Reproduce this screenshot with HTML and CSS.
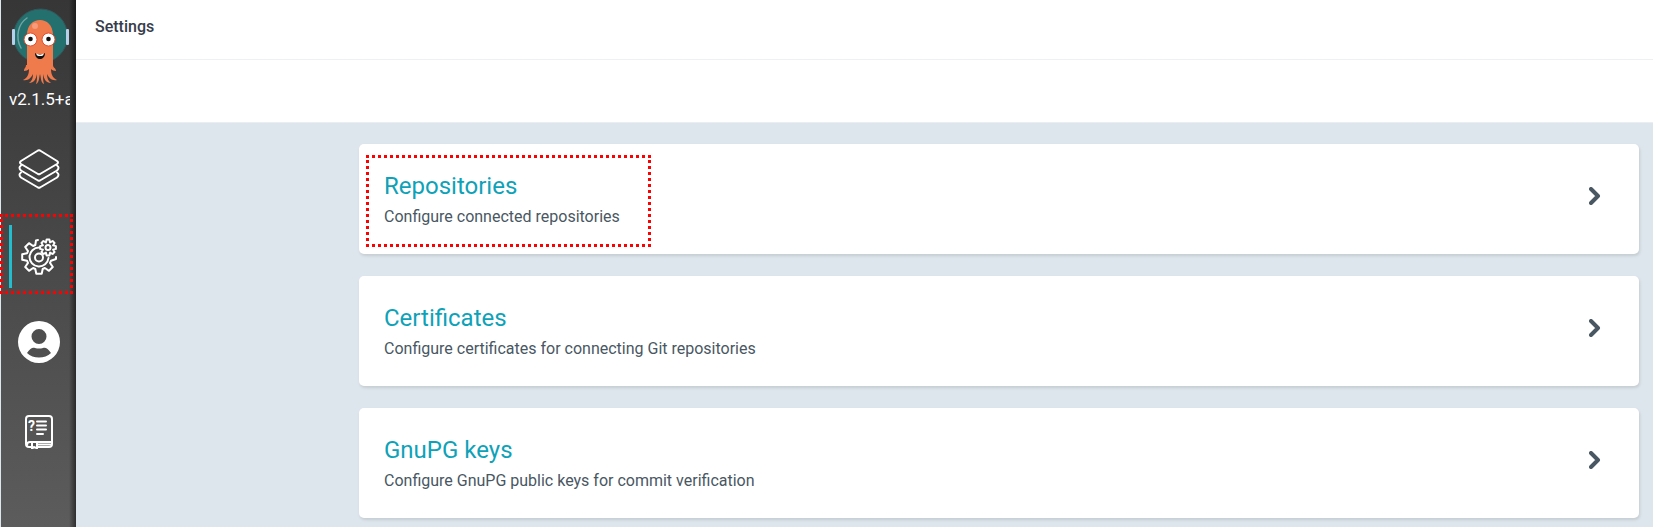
FILE: index.html
```html
<!DOCTYPE html>
<html lang="en">
<head>
  <meta charset="UTF-8" />
  <meta name="viewport" content="width=device-width, initial-scale=1" />
  <title>Settings</title>
  <link rel="stylesheet" href="styles.css">
</head>
<body>
  <nav class="sidebar">
    <a class="logo" href="#" aria-label="Home">
      <svg width="59" height="78" viewBox="0 0 59 78">
        <circle cx="29.500" cy="28" r="27" fill="#24706f" stroke="#34575b" />
        <rect x="1" y="21" width="3" height="16" rx="1" fill="#b5d0e8" />
        <rect x="55" y="21" width="3" height="16" rx="1" fill="#b5d0e8" />
        <path d="M10 40C4 29 7 16 16 10" fill="none" stroke="#6fa5a4" stroke-width="1.500" stroke-linecap="round" />
        <path d="M16 57V27C16 7 42 7 42 27v30c0 3 3 3 3 6-2 0-4-1-5-2 0 6 2 9 6 11-5 1-8-2-10-6 0 4 1 7 4 9-5 0-7-4-8-9 0 4 0 7 1 10-3-1-3-6-4-10-1 4-1 9-4 10 1-3 1-6 1-10-1 5-3 9-8 9 3-2 4-5 4-9-2 4-5 7-10 6 4-2 6-5 6-11-1 1-3 2-5 2 0-3 2-3 2-6z" fill="#ef7b4d" />
        <circle cx="24" cy="18" r="3" fill="#f69b7b" />
        <circle cx="19.500" cy="31.500" r="6.500" fill="#fff" stroke="#e34f2d" />
        <circle cx="37.500" cy="31.500" r="6.500" fill="#fff" stroke="#e34f2d" />
        <circle cx="19.500" cy="31" r="2.300" fill="#111" />
        <circle cx="37.500" cy="31" r="2.300" fill="#111" />
        <path d="M24 45c3 2 7 2 10 0 0 8-10 8-10 0z" fill="#111" />
        <path d="M25 45.500c3 1.500 5 1.500 8 0l-1 2q-3 1-6 0z" fill="#fff" />
      </svg>
    </a>
    <div class="version">v2.1.5+a</div>

    <ul class="nav">
      <li>
        <a class="nav-link" href="#" aria-label="Applications">
          <svg class="line" width="42" height="44" viewBox="0 0 42 44">
            <path d="M20 2.500Q21 2 22 2.500L39 13Q41 14.500 39 16L22 26Q21 26.500 20 26L3 16Q1 14.500 3 13z" />
            <path d="M3 17.500Q0 19.500 3 22.500L20 32.500Q21 33 22 32.500L39 22.500Q42 19.500 39 17.500" />
            <path d="M3 24.500Q0 26.500 3 29.500L20 39.500Q21 40 22 39.500L39 29.500Q42 26.500 39 24.500" />
          </svg>
        </a>
      </li>
      <li>
        <a class="nav-link active" href="#" aria-label="Settings">
          <svg class="line" width="38" height="38" viewBox="0 0 38 38">
            <path d="M36 19v2l-5 1.700-1 2.200 2.800 4.100-3.800 3.800-4.100-2.800-2.200 1-1 4.800h-5.400l-1-4.800-2.200-1L9 32.800 5.200 29 8 24.900l-1-2.200-4.800-1v-5.400l4.800-1 1-2.200L5.200 9 9 5.200 13.100 8l2.200-1L16 2.500l2-.5" />
            <path d="M19 9.500a9.500 9.500 0 1 0 9.500 10.500" />
            <circle cx="19" cy="19.500" r="4" />
            <path d="M35.900 8.100v2.800l-2.800.7 1.400 2.500-1.900 1.900-2.500-1.400-.7 2.800h-2.800l-.7-2.800-2.500 1.400-1.900-1.900 1.400-2.500-2.800-.7V8.100l2.800-.7-1.400-2.500L23.400 3l2.500 1.400.7-2.800h2.800l.7 2.800L32.600 3l1.900 1.900-1.400 2.500z" />
            <circle cx="28" cy="9.500" r="2.500" />
          </svg>
        </a>
      </li>
      <li>
        <a class="nav-link" href="#" aria-label="User info">
          <svg width="42" height="46" viewBox="0 0 42 46">
            <path fill="#fff" fill-rule="evenodd" d="M21 0a21 21 0 1 1 0 42 21 21 0 0 1 0-42zm0 8a7 7 0 1 0 0 15 7 7 0 0 0 0-15zM9 32c6 6 18 6 24 0-3-5-6-6-8-5q-4 1-8 0c-2-1-5 0-8 5z" />
          </svg>
        </a>
      </li>
      <li>
        <a class="nav-link" href="#" aria-label="Documentation">
          <svg class="line" width="28" height="36" viewBox="0 -2 28 36">
            <path d="M8 32H4q-3 0-3-3V4q0-3 3-3h20q3 0 3 3v25q0 3-3 3H12" />
            <path d="M2 30q0-3 3-3h21M12 29.500h14" />
            <path d="M7 27v6.500l2.500-1.500 2.500 1.500V27" />
            <path d="M12 6.500h9M12 10.500h9M12 14.500h9M12 19h6" />
            <text class="mark" x="3" y="16">?</text>
          </svg>
        </a>
      </li>
    </ul>
  </nav>

  <main class="page">
    <header class="top-bar">
      <h1>Settings</h1>
    </header>
    <div class="toolbar"></div>

    <div class="settings">
      <a class="card" href="#">
        <div class="card-text">
          <h2>Repositories</h2>
          <p>Configure connected repositories</p>
        </div>
        <svg class="chevron" width="12" height="18" viewBox="0 0 12 18"><path d="M2 2l7 7-7 7" /></svg>
        <span class="highlight"></span>
      </a>
      <a class="card" href="#">
        <div class="card-text">
          <h2>Certificates</h2>
          <p>Configure certificates for connecting Git repositories</p>
        </div>
        <svg class="chevron" width="12" height="18" viewBox="0 0 12 18"><path d="M2 2l7 7-7 7" /></svg>
      </a>
      <a class="card" href="#">
        <div class="card-text">
          <h2>GnuPG keys</h2>
          <p>Configure GnuPG public keys for commit verification</p>
        </div>
        <svg class="chevron" width="12" height="18" viewBox="0 0 12 18"><path d="M2 2l7 7-7 7" /></svg>
      </a>
    </div>
  </main>
</body>
</html>
```
FILE: styles.css
```css
* {
  box-sizing: border-box;
}

body {
  margin: 0;
  display: flex;
  min-height: 100vh;
  font-family: Roboto, sans-serif;
  color: #495763;
  background: #dee6ed;
}

h1, h2, p, ul {
  margin: 0;
  padding: 0;
}

a {
  color: inherit;
  text-decoration: none;
}

.sidebar {
  width: 76px;
  flex-shrink: 0;
  border-left: 1px solid #dee6ed;
  background: linear-gradient(to right, transparent 68px, rgba(0, 0, 0, 0.5)), linear-gradient(to bottom, #363636, #5c5c5c);
}

.logo {
  display: block;
  height: 84px;
  padding: 8px 0 0 10px;
}

.version {
  margin: 4px 6px 0 8px;
  height: 22px;
  font-size: 17px;
  line-height: 22px;
  color: #fff;
  white-space: nowrap;
  overflow: hidden;
}

.nav {
  margin-top: 28px;
  display: flex;
  flex-direction: column;
  gap: 24px;
  list-style: none;
}

.nav-link {
  position: relative;
  display: flex;
  align-items: center;
  justify-content: center;
  height: 63px;
  margin: 0 10px 0 8px;
  border-left: 3px solid transparent;
}

.nav-link.active {
  border-color: #23bdd0;
}

.line {
  fill: none;
  stroke: #fff;
  stroke-width: 2;
  stroke-linecap: round;
  stroke-linejoin: round;
}

.mark {
  font-size: 14px;
  font-weight: 700;
  fill: #fff;
  stroke: none;
}

/* dotted frame around the active entry */
.nav-link.active::after {
  content: "";
  position: absolute;
  inset: -11px -7px -6px -12px;
  border: 3px dotted #f00;
}

.page {
  flex: 1;
}

.top-bar {
  height: 60px;
  padding: 16px 19px;
  background: #fff;
  border-bottom: 1px solid #eff0f2;
}

.top-bar h1 {
  font-size: 16px;
  line-height: 22px;
  font-weight: 500;
  color: #363c4a;
}

.toolbar {
  height: 63px;
  background: #fff;
  border-bottom: 1px solid #eaeef1;
}

.settings {
  display: flex;
  flex-direction: column;
  gap: 22px;
  padding: 21px 14px 8px 283px;
}

.card {
  position: relative;
  display: flex;
  align-items: center;
  justify-content: space-between;
  padding: 25px 38px 23px 25px;
  background: #fff;
  border-radius: 5px;
  box-shadow: 1px 2px 3px #c5cdd2;
}

.card h2 {
  font-size: 24px;
  line-height: 34px;
  font-weight: 400;
  color: #0ea2b8;
}

.card p {
  font-size: 16px;
  line-height: 28px;
}

.chevron {
  margin-bottom: 8px;
  fill: none;
  stroke: #495763;
  stroke-width: 4;
  stroke-linecap: round;
  stroke-linejoin: round;
}

.highlight {
  position: absolute;
  top: 11px;
  left: 7px;
  width: 285px;
  height: 92px;
  border: 3px dotted #f00;
}
```
